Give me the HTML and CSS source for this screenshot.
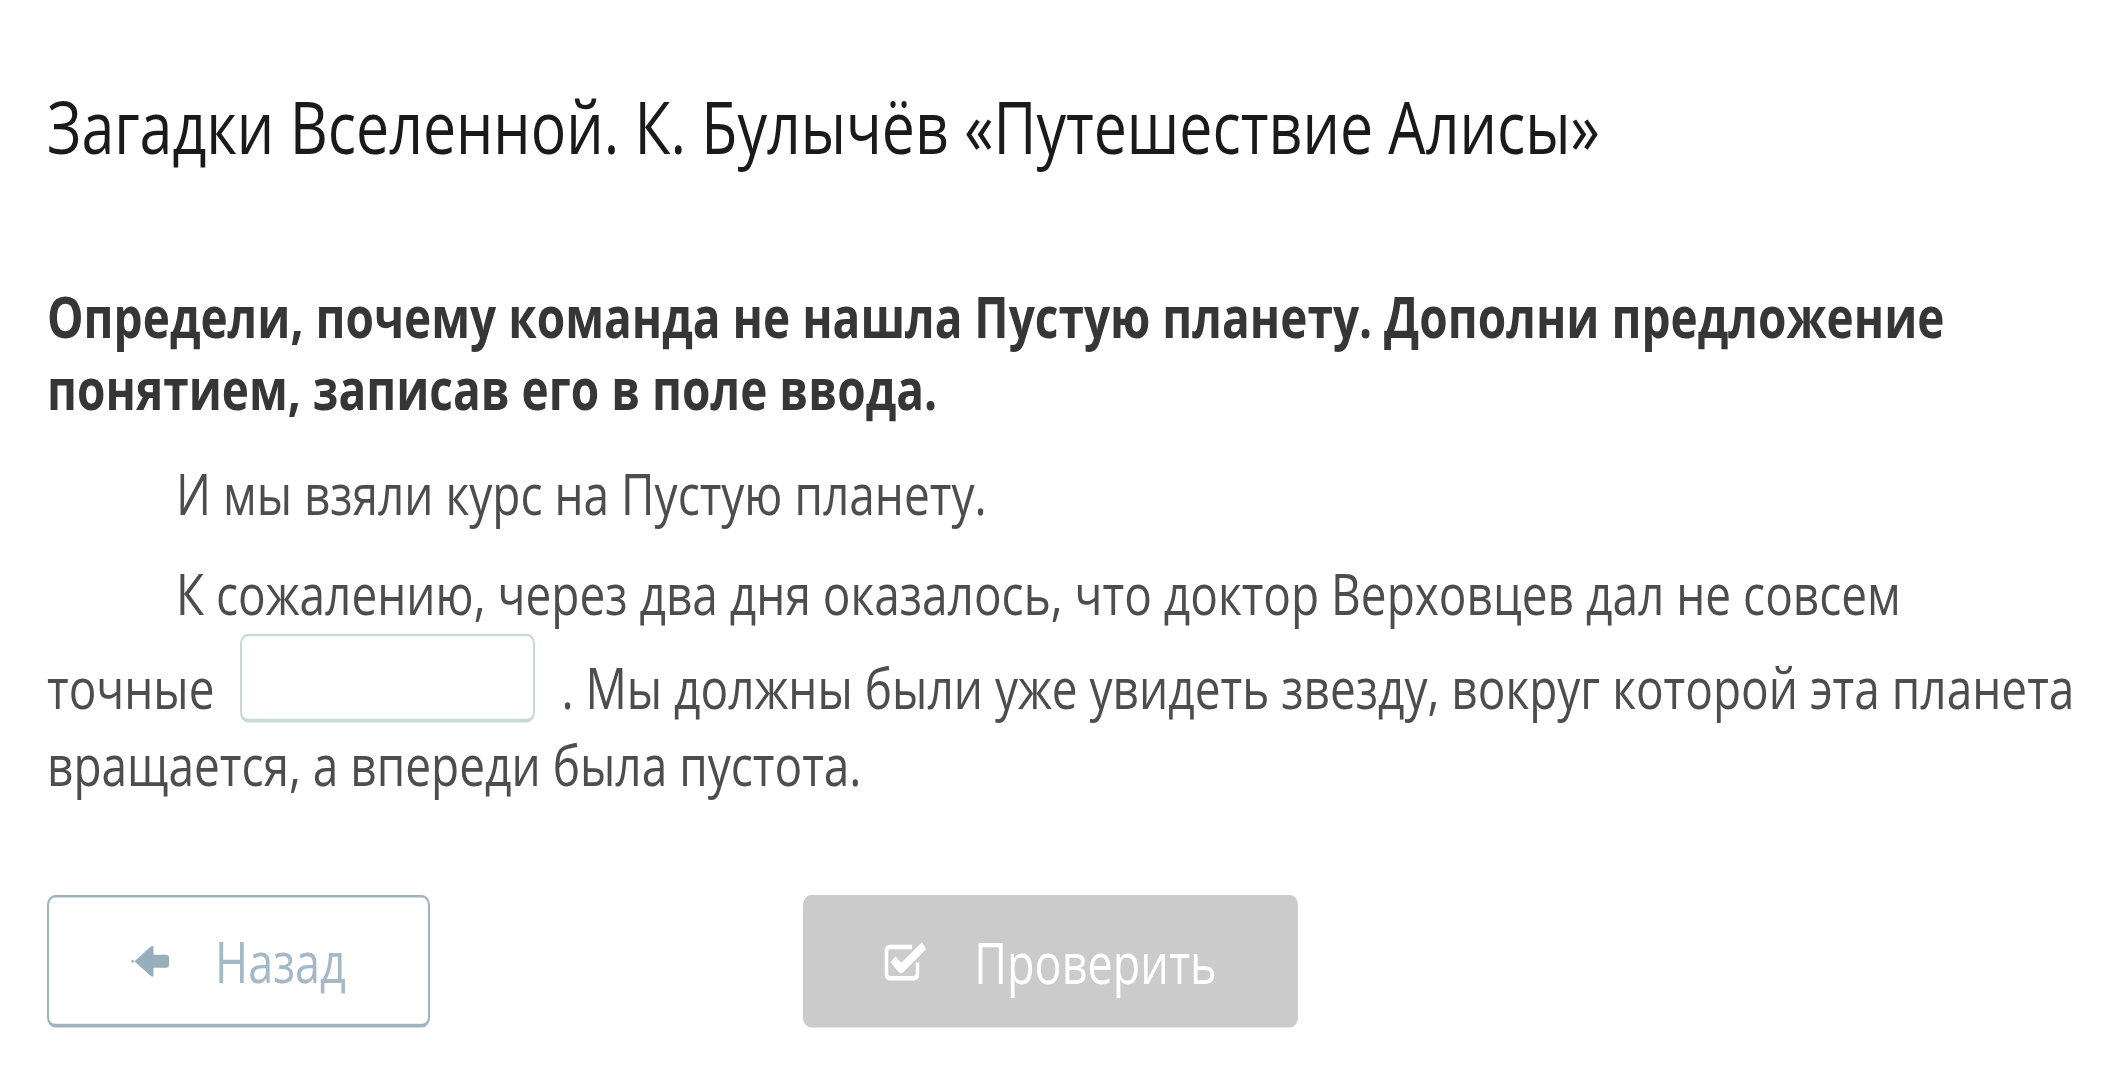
FILE: index.html
```html
<!DOCTYPE html>
<html lang="ru">
<head>
<meta charset="utf-8">
<title>Загадки Вселенной</title>
<link rel="stylesheet" href="styles.css">
</head>
<body>
<div class="page">
  <h1 class="title">Загадки Вселенной. К. Булычёв «Путешествие Алисы»</h1>
  <p class="task">Определи, почему команда не нашла Пустую планету. Дополни предложение понятием, записав его в поле ввода.</p>
  <p class="text">И мы взяли курс на Пустую планету.</p>
  <p class="text">К сожалению, через два дня оказалось, что доктор Верховцев дал не совсем <span class="nowrap">точные <input class="blank" type="text" aria-label="ответ"></span> . Мы должны были уже увидеть звезду, вокруг которой эта планета вращается, а впереди была пустота.</p>
  <div class="actions">
    <button class="btn btn-back" type="button">
      <svg class="ico-back" viewBox="0 0 38 26" width="38" height="26" aria-hidden="true"><path d="M1.3 14.5 L19.8 1.2 Q22.5 -0.6 22.5 2.6 L22.5 7.8 L35.5 7.8 Q38 7.8 38 10.2 L38 15.8 Q38 18.2 35.5 18.2 L22.5 18.2 L22.5 23.4 Q22.5 26.6 19.8 24.8 L1.3 11.5 Q-0.7 13 1.3 14.5 Z" fill="#97afbd"/></svg>
      <span>Назад</span>
    </button>
    <button class="btn btn-check" type="button">
      <svg class="ico-check" viewBox="0 0 44 31" width="44" height="31" aria-hidden="true"><path d="M28 3.5 H6 Q2.5 3.5 2.5 7 V25 Q2.5 28.5 6 28.5 H30 Q33.5 28.5 33.5 25 V16" fill="none" stroke="#fff" stroke-width="3.6"/><path d="M9 13.5 L17 21 L40 2.5" fill="none" stroke="#fff" stroke-width="7" stroke-linejoin="round"/></svg>
      <span>Проверить</span>
    </button>
  </div>
</div>
</body>
</html>
```
FILE: styles.css
```css
html, body {
  margin: 0;
  padding: 0;
  background: #fff;
}
body {
  min-height: 1080px;
}
.page {
  width: 2050px;
  padding: 66px 0 0 47px;
  font-family: "Open Sans", "Noto Sans", sans-serif;
  transform: scaleY(1.25);
  transform-origin: 0 0;
}
.title {
  margin: 0;
  font-size: 59px;
  line-height: 68px;
  font-weight: 400;
  color: #1a1a1a;
}
.task {
  margin: 89px 0 24px;
  font-size: 46px;
  line-height: 58px;
  font-weight: 700;
  color: #363636;
}
.text {
  margin: 0 0 18px;
  font-size: 46px;
  line-height: 62px;
  color: #4d4d4d;
  text-indent: 129px;
}
.nowrap {
  white-space: nowrap;
}
.blank {
  box-sizing: border-box;
  width: 295px;
  height: 71px;
  margin: 2px 14px;
  padding: 0 10px;
  border: 2px solid #c9d9da;
  border-bottom-width: 3px;
  border-radius: 8px;
  background: #fff;
  vertical-align: bottom;
  font: inherit;
  text-indent: 0;
}
.actions {
  display: flex;
  gap: 373px;
  margin-top: 74px;
}
.btn {
  box-sizing: border-box;
  display: flex;
  align-items: center;
  justify-content: center;
  gap: 46px;
  height: 106px;
  border-radius: 8px;
  font-family: "Open Sans", "Noto Sans", sans-serif;
  font-size: 45px;
  padding: 0;
}
.btn-back {
  width: 383px;
  background: #fff;
  border: 2px solid #9fb4be;
  border-bottom-width: 3px;
  color: #a3b9c5;
}
.btn-check {
  width: 495px;
  background: #cbcbcb;
  border: none;
  color: #fff;
}
.ico-back, .ico-check {
  display: block;
  flex: none;
}
```
